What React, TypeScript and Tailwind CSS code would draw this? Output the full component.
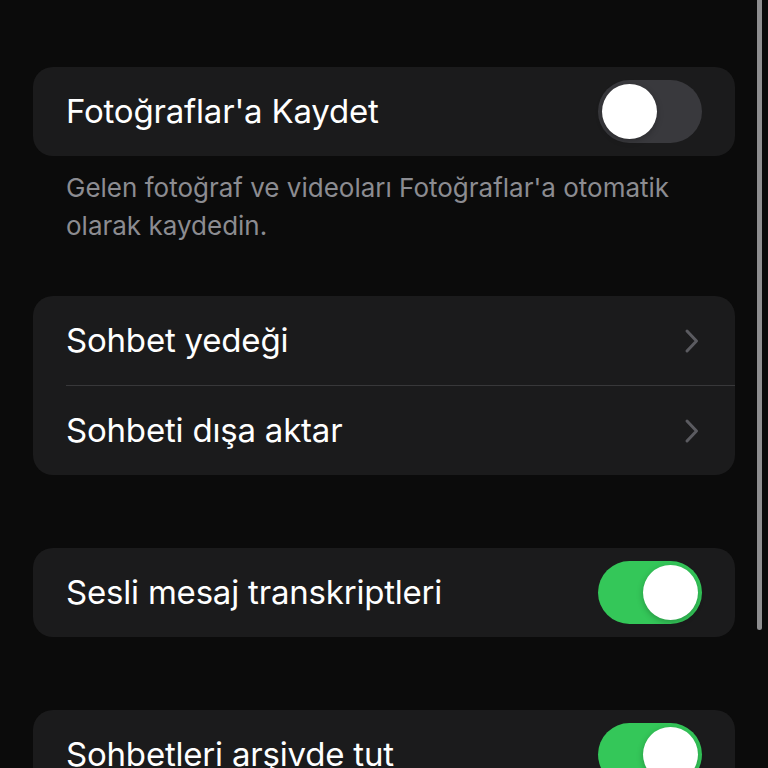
import { useState } from 'react'

// Sohbet ayarları ekranı (karanlık tema)

function Toggle({ on, onChange }: { on: boolean; onChange: () => void }) {
  return (
    <button
      onClick={onChange}
      className={`flex h-[63px] w-[104px] shrink-0 items-center rounded-full p-[4px] ${
        on ? 'justify-end bg-[#34c759]' : 'justify-start bg-[#39393d]'
      }`}
    >
      <span className="h-[55px] w-[55px] rounded-full bg-white shadow-[0_2px_6px_rgba(0,0,0,0.25)]" />
    </button>
  )
}

function Chevron() {
  return (
    <svg width="16" height="26" viewBox="0 0 16 26" className="shrink-0">
      <path d="M3 3 L12.5 13 L3 23" fill="none" stroke="#5b5b60" strokeWidth="3" strokeLinecap="round" strokeLinejoin="round" />
    </svg>
  )
}

function ToggleRow({ label, initial }: { label: string; initial: boolean }) {
  const [on, setOn] = useState(initial)
  return (
    <div className="flex h-[89px] items-center justify-between pl-[33px] pr-[33px]">
      <span className="text-[33px] text-white tracking-[-0.2px]">{label}</span>
      <Toggle on={on} onChange={() => setOn(!on)} />
    </div>
  )
}

export default function App() {
  return (
    <div
      className="relative h-[768px] w-[768px] overflow-hidden bg-[#0b0b0b]"
      style={{ fontFamily: 'Inter, "Noto Sans", sans-serif' }}
    >
      <div className="flex flex-col px-[33px] pt-[67px]">
        <div className="overflow-hidden rounded-[20px] bg-[#1b1b1c]">
          <ToggleRow label="Fotoğraflar'a Kaydet" initial={false} />
        </div>
        <p className="mt-[13px] pl-[33px] pr-[20px] text-[26px] leading-[38px] text-[#8c8c91]">
          Gelen fotoğraf ve videoları Fotoğraflar'a otomatik olarak kaydedin.
        </p>

        <div className="mt-[51px] overflow-hidden rounded-[20px] bg-[#1b1b1c]">
          <div className="flex h-[89px] items-center justify-between pl-[33px] pr-[35px]">
            <span className="text-[33px] text-white tracking-[-0.2px]">Sohbet yedeği</span>
            <Chevron />
          </div>
          <div className="ml-[33px] h-px bg-[#38383a]" />
          <div className="flex h-[89px] items-center justify-between pl-[33px] pr-[35px]">
            <span className="text-[33px] text-white tracking-[-0.2px]">Sohbeti dışa aktar</span>
            <Chevron />
          </div>
        </div>

        <div className="mt-[73px] overflow-hidden rounded-[20px] bg-[#1b1b1c]">
          <ToggleRow label="Sesli mesaj transkriptleri" initial={true} />
        </div>

        <div className="mt-[73px] overflow-hidden rounded-[20px] bg-[#1b1b1c]">
          <ToggleRow label="Sohbetleri arşivde tut" initial={true} />
        </div>
      </div>

      {/* kaydırma göstergesi */}
      <div className="absolute right-[6px] top-0 h-[630px] w-[5px] rounded-b-full bg-[#8e8e90]" />
    </div>
  )
}
